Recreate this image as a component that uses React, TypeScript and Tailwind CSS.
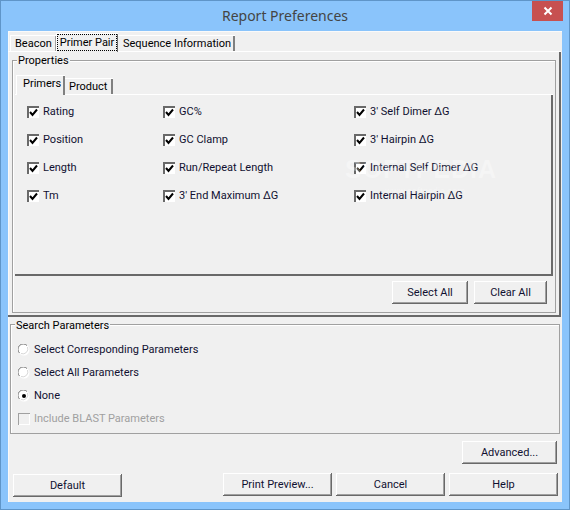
const FONT = "font-['Roboto',sans-serif]";

function Check({ label, disabled }: { label: string; disabled?: boolean }) {
  return (
    <div className="flex items-center h-[12px] gap-[4px] whitespace-nowrap">
      <div className={`w-[12px] h-[12px] shrink-0 flex items-center justify-center ${disabled ? "bg-[#f0f0f0] shadow-[inset_1px_1px_0_#a0a0a0,inset_-1px_-1px_0_#fff]" : "bg-white shadow-[inset_2px_2px_0_#696969,inset_-1px_-1px_0_#fff]"}`}>
        {!disabled && (
          <svg width="9" height="9" viewBox="0 0 9 9" className="block">
            <path d="M1 4 L3.5 7 L8 1.5" fill="none" stroke="#000" strokeWidth="2" />
          </svg>
        )}
      </div>
      <span className={disabled ? "text-[#a0a0a0]" : "text-[#101030]"}>{label}</span>
    </div>
  );
}

function Radio({ label, on }: { label: string; on?: boolean }) {
  return (
    <div className="flex items-center h-[12px] gap-[4px] whitespace-nowrap">
      <svg width="12" height="12" viewBox="0 0 12 12" className="shrink-0 block">
        <circle cx="6" cy="6" r="5.5" fill="#fff" />
        <path d="M1.5 9 A5 5 0 0 1 9 1.5" fill="none" stroke="#7a7a7a" />
        <path d="M9.5 3 A5 5 0 0 1 3 9.5" fill="none" stroke="#d8d8d8" />
        {on && <circle cx="6" cy="6" r="2" fill="#000" />}
      </svg>
      <span className="text-[#101030]">{label}</span>
    </div>
  );
}

function Btn({ label, w, cls = "" }: { label: string; w: string; cls?: string }) {
  return (
    <div className={`${w} ${cls} h-[23px] flex items-center justify-center bg-[#f0f0f0] text-[#101030] whitespace-nowrap shadow-[inset_-1px_-1px_0_#696969,inset_1px_1px_0_#fff,inset_-2px_-2px_0_#a0a0a0]`}>
      {label}
    </div>
  );
}

export default function App() {
  const col1 = ["Rating", "Position", "Length", "Tm"];
  const col2 = ["GC%", "GC Clamp", "Run/Repeat Length", "3' End Maximum ΔG"];
  const col3 = ["3' Self Dimer ΔG", "3' Hairpin ΔG", "Internal Self Dimer ΔG", "Internal Hairpin ΔG"];
  return (
    <div className={`${FONT} relative w-[570px] h-[510px] bg-[#8ac4fb] border border-[#5f95c8] text-[11px] leading-[14px] flex flex-col`}>
      <div className="h-[30px] flex items-center justify-center relative text-[14px] text-[#444] font-['Noto_Sans',sans-serif]">
        Report Preferences
        <div className="absolute right-[6px] top-0 w-[31px] h-[20px] bg-[#c75050] flex items-center justify-center">
          <svg width="10" height="10" viewBox="0 0 10 10"><path d="M1.5 1.5 L8.5 8.5 M8.5 1.5 L1.5 8.5" stroke="#fff" strokeWidth="2" /></svg>
        </div>
      </div>
      <div className="mx-[7px] h-[471px] bg-[#f0f0f0] shadow-[inset_1px_1px_0_#fafafa] flex flex-col">
        <div className="h-[20px] flex items-end pl-[2px] whitespace-nowrap">
          <div className="w-[46px] h-[16px] pl-[4px] flex items-center border-l border-t border-white shadow-[inset_-1px_0_0_#a0a0a0]">Beacon</div>
          <div className="w-[62px] h-[19px] flex items-start border-l border-t border-white shadow-[inset_-1px_0_0_#696969] relative z-10 -mb-[1px] bg-[#f0f0f0]">
            <span className="w-[60px] h-[17px] flex items-center justify-center border border-dotted border-black">Primer Pair</span>
          </div>
          <div className="w-[117px] h-[16px] pl-[5px] flex items-center border-t border-white shadow-[inset_-2px_0_0_#808080]">Sequence Information</div>
        </div>
        <div className="h-[266px] mr-[1px] border-t border-white shadow-[inset_-2px_-2px_0_#696969] pl-[4px] pr-[5px] pt-[8px]">
          <div className="relative h-[253px] border border-[#a0a0a0] shadow-[inset_1px_1px_0_#fff] flex flex-col px-[2px] pt-[14px]">
            <div className="absolute left-[4px] -top-[7px] bg-[#f0f0f0] px-[1px]">Properties</div>
            <div className="h-[19px] flex items-end ml-[1px] whitespace-nowrap">
              <div className="w-[49px] h-[20px] pl-[6px] pb-[3px] flex items-center border-l border-t border-white shadow-[inset_-2px_0_0_#808080] relative z-10 -mb-[1px] bg-[#f0f0f0]">Primers</div>
              <div className="w-[48px] h-[16px] pl-[4px] flex items-center border-t border-white shadow-[inset_-2px_0_0_#808080]">Product</div>
            </div>
            <div className="h-[182px] border-t border-white shadow-[inset_-2px_-2px_0_#696969] pt-[11px] pl-[12px] grid grid-cols-[136px_191px_1fr] grid-rows-[repeat(4,28px)]">
              {[0, 1, 2, 3].map((i) => (
                <div key={i} className="contents">
                  <Check label={col1[i]} />
                  <Check label={col2[i]} />
                  <Check label={col3[i]} />
                </div>
              ))}
            </div>
            <div className="flex justify-end gap-[6px] pt-[5px] pr-[6px]">
              <Btn label="Select All" w="w-[76px]" />
              <Btn label="Clear All" w="w-[73px]" />
            </div>
          </div>
        </div>
        <div className="relative h-[110px] mt-[7px] ml-[2px] mr-[2px] border border-[#a0a0a0] shadow-[inset_1px_1px_0_#fff] pt-[19px] pl-[7px] flex flex-col gap-[11px]">
          <div className="absolute left-[4px] -top-[6px] bg-[#f0f0f0] px-[1px]">Search Parameters</div>
          <Radio label="Select Corresponding Parameters" />
          <Radio label="Select All Parameters" />
          <Radio label="None" on />
          <Check label="Include BLAST Parameters" disabled />
        </div>
        <div className="flex justify-end pr-[5px] pt-[7px]">
          <Btn label="Advanced..." w="w-[95px]" />
        </div>
        <div className="flex items-start pt-[9px] pl-[5px] gap-[4px]">
          <Btn label="Default" w="w-[109px]" cls="mt-[1px]" />
          <div className="w-[93px]" />
          <Btn label="Print Preview..." w="w-[109px]" />
          <Btn label="Cancel" w="w-[109px]" />
          <Btn label="Help" w="w-[109px]" />
        </div>
      </div>
      <div className="absolute left-[344px] top-[154px] text-[25px] leading-[28px] font-bold tracking-[1px] text-white/35 font-['Liberation_Sans',sans-serif] pointer-events-none">SOFTPEDIA</div>
      <div className="absolute left-[384px] top-[185px] text-[9px] leading-[10px] text-white/30 pointer-events-none">www.softpedia.com</div>
    </div>
  );
}
